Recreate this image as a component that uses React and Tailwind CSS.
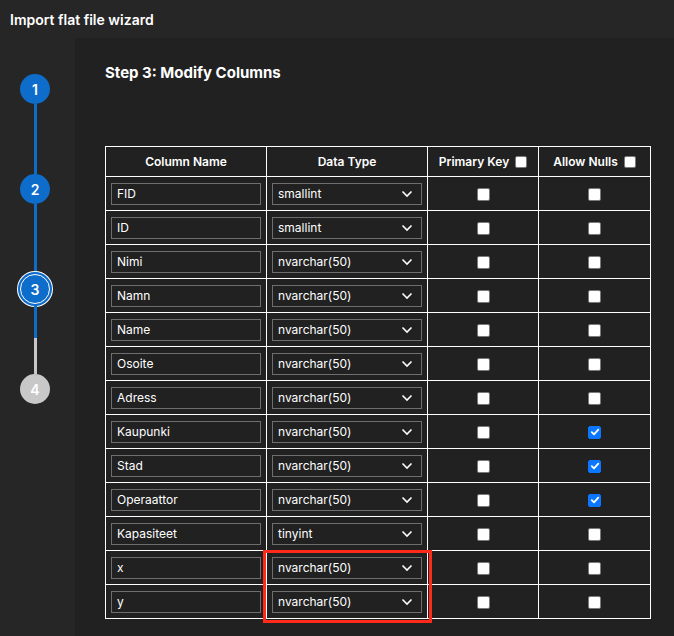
const rows = [
  { name: "FID", type: "smallint", nulls: false },
  { name: "ID", type: "smallint", nulls: false },
  { name: "Nimi", type: "nvarchar(50)", nulls: false },
  { name: "Namn", type: "nvarchar(50)", nulls: false },
  { name: "Name", type: "nvarchar(50)", nulls: false },
  { name: "Osoite", type: "nvarchar(50)", nulls: false },
  { name: "Adress", type: "nvarchar(50)", nulls: false },
  { name: "Kaupunki", type: "nvarchar(50)", nulls: true },
  { name: "Stad", type: "nvarchar(50)", nulls: true },
  { name: "Operaattor", type: "nvarchar(50)", nulls: true },
  { name: "Kapasiteet", type: "tinyint", nulls: false },
  { name: "x", type: "nvarchar(50)", nulls: false },
  { name: "y", type: "nvarchar(50)", nulls: false },
];

const Check = ({ checked, small }) => (
  <span
    className={`inline-flex items-center justify-center rounded-[2px] ${
      small ? "w-[12px] h-[12px]" : "w-[13px] h-[13px]"
    } ${
      checked
        ? "bg-[#0b76ff] border border-[#0b76ff]"
        : "bg-white border border-[#7a7a7a]"
    }`}
  >
    {checked && (
      <svg width="10" height="10" viewBox="0 0 10 10">
        <path d="M1.8 5.2 L4 7.4 L8.3 2.6" fill="none" stroke="white" strokeWidth="1.8" strokeLinecap="round" strokeLinejoin="round" />
      </svg>
    )}
  </span>
);

const Chevron = () => (
  <svg width="12" height="8" viewBox="0 0 12 8" className="shrink-0">
    <path d="M1.5 1.5 L6 6 L10.5 1.5" fill="none" stroke="white" strokeWidth="1.6" />
  </svg>
);

const Step = ({ n, state }) => {
  if (state === "current") {
    return (
      <div className="w-[30px] h-[30px] rounded-full bg-[#0e6ccb] border border-white shadow-[0_0_0_2px_#0e6ccb,0_0_0_3px_white] flex items-center justify-center text-white text-[14px] font-semibold">
        {n}
      </div>
    );
  }
  return (
    <div
      className={`w-[30px] h-[30px] rounded-full flex items-center justify-center text-white text-[14px] font-semibold ${
        state === "done" ? "bg-[#0e6ccb]" : "bg-[#c8c8c8]"
      }`}
    >
      {n}
    </div>
  );
};

export default function App() {
  return (
    <div
      className="w-[674px] h-[636px] bg-[#262626] text-white overflow-hidden relative"
      style={{ fontFamily: "Inter, 'Liberation Sans', sans-serif" }}
    >
      {/* Title bar */}
      <div className="h-[38px] px-[10px] flex items-center">
        <span className="text-[14px] font-semibold">Import flat file wizard</span>
      </div>

      <div className="flex">
        {/* Step rail */}
        <div className="w-[75px] pr-[5px] flex flex-col items-center pt-[36px]">
          <Step n="1" state="done" />
          <div className="w-[3px] h-[70px] bg-[#0e6ccb]" />
          <Step n="2" state="done" />
          <div className="w-[3px] h-[70px] bg-[#0e6ccb]" />
          <Step n="3" state="current" />
          <div className="w-[3px] h-[34px] bg-[#0e6ccb]" />
          <div className="w-[3px] h-[36px] bg-[#c8c8c8]" />
          <Step n="4" state="todo" />
        </div>

        {/* Content */}
        <div className="flex-1 h-[598px] bg-[#212121] pl-[30px] pt-[26px]">
          <h2 className="text-[15px] font-bold leading-[18px]">Step 3: Modify Columns</h2>

          <table className="mt-[64px] border-collapse text-[12px]">
            <thead>
              <tr className="h-[30px]">
                <th className="border border-white w-[161px] font-semibold">Column Name</th>
                <th className="border border-white w-[161px] font-semibold">Data Type</th>
                <th className="border border-white w-[111px] font-semibold">
                  <span className="inline-flex items-center gap-[6px]">
                    Primary Key <Check small />
                  </span>
                </th>
                <th className="border border-white w-[112px] font-semibold">
                  <span className="inline-flex items-center gap-[6px]">
                    Allow Nulls <Check small />
                  </span>
                </th>
              </tr>
            </thead>
            <tbody>
              {rows.map((r) => (
                <tr key={r.name} className="h-[34px]">
                  <td className="border border-white px-[5px]">
                    <div className="h-[22px] border border-[#6e6e6e] flex items-center px-[5px]">
                      {r.name}
                    </div>
                  </td>
                  <td className="border border-white px-[5px]">
                    <div className="h-[22px] border border-[#6e6e6e] flex items-center justify-between pl-[5px] pr-[8px]">
                      <span>{r.type}</span>
                      <Chevron />
                    </div>
                  </td>
                  <td className="border border-white text-center">
                    <span className="inline-flex align-middle">
                      <Check />
                    </span>
                  </td>
                  <td className="border border-white text-center">
                    <span className="inline-flex align-middle">
                      <Check checked={r.nulls} />
                    </span>
                  </td>
                </tr>
              ))}
            </tbody>
          </table>
        </div>
      </div>

      {/* Annotation highlight */}
      <div className="absolute left-[263px] top-[550px] w-[169px] h-[73px] border-[3px] border-[#ff2a1a]" />
    </div>
  );
}
